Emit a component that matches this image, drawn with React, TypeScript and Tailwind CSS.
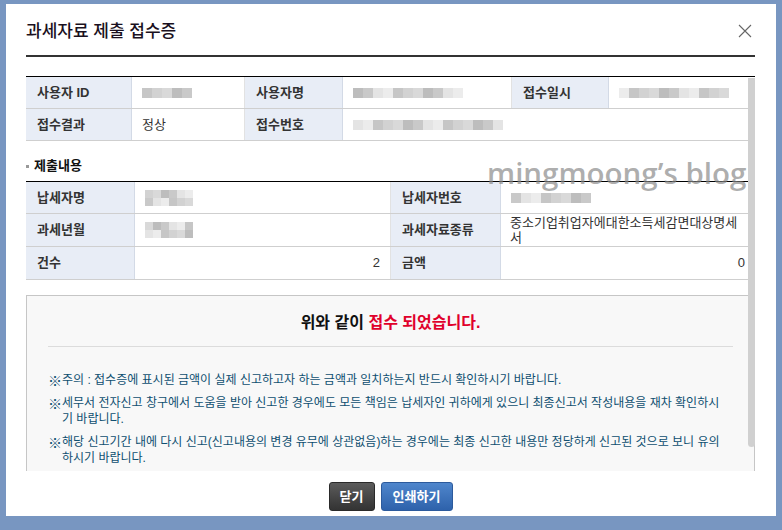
const shades = ['#d9d9d9', '#c6c6c6', '#e4e4e4', '#bdbdbd', '#d2d2d2', '#ececec', '#c9c9c9'];

function Blur({ w, rows = 1, seed = 0, size = 10 }: { w: number; rows?: number; seed?: number; size?: number }) {
  const cols = Math.round(w / size);
  return (
    <div className="flex flex-col blur-[0.6px]">
      {Array.from({ length: rows }).map((_, r) => (
        <div key={r} className="flex">
          {Array.from({ length: cols }).map((_, c) => (
            <span
              key={c}
              className="block"
              style={{ width: size, height: size, background: shades[(c * 3 + r * 2 + seed) % shades.length] }}
            />
          ))}
        </div>
      ))}
    </div>
  );
}

const th = 'flex items-center bg-[#e8edf6] pl-[11px] text-[13px] font-bold text-[#333] border-r border-[#d3dae6]';
const td = 'flex items-center px-[10px] text-[13px] text-[#333] border-r border-[#e2e2e2]';

function Note({ lines }: { lines: string[] }) {
  return (
    <li className="flex">
      <span className="w-[13px] shrink-0 font-['Noto_Sans_CJK_KR',sans-serif] text-[14px] leading-[16px]">※</span>
      <span className="flex flex-col whitespace-nowrap pl-[1px]">
        {lines.map((l) => (
          <span key={l}>{l}</span>
        ))}
      </span>
    </li>
  );
}

export default function App() {
  return (
    <div className="h-[530px] w-[782px] overflow-hidden bg-[#7896c1] pb-[14px] pl-[6px] pr-[6px] pt-[4px] font-['Liberation_Sans','Noto_Sans_CJK_KR',sans-serif]">
      <div className="relative flex h-[512px] flex-col bg-white px-[20px] pr-[21px]">
        <header className="flex h-[51px] items-center justify-between">
          <h1 className="pt-[4px] text-[17px] font-medium leading-none text-[#1a1020]">과세자료 제출 접수증</h1>
          <svg width="14" height="14" viewBox="0 0 14 14" className="mr-[3px] mt-[2px]">
            <path d="M1 1L13 13M13 1L1 13" stroke="#666" strokeWidth="1.1" />
          </svg>
        </header>
        <div className="h-[2px] bg-[#333]" />

        <div className="relative mt-[19px] h-[395px] overflow-hidden">
          {/* 수신 정보 */}
          <div className="border-t border-black">
            <div className="grid h-[32px] grid-cols-[106px_113px_98px_169px_97px_1fr] border-b border-[#cfcfcf]">
              <div className={th}>사용자 ID</div>
              <div className={td}><Blur w={50} seed={1} /></div>
              <div className={th}>사용자명</div>
              <div className={td}><Blur w={110} seed={3} /></div>
              <div className={th}>접수일시</div>
              <div className={`${td} border-r-0`}><Blur w={110} seed={5} /></div>
            </div>
            <div className="grid h-[32px] grid-cols-[106px_113px_98px_1fr] border-b border-[#cfcfcf]">
              <div className={th}>접수결과</div>
              <div className={td}>정상</div>
              <div className={th}>접수번호</div>
              <div className={`${td} border-r-0`}><Blur w={150} seed={2} /></div>
            </div>
          </div>

          <div className="flex h-[40px] items-center gap-[5px] pt-[10px]">
            <span className="block h-[3px] w-[3px] bg-[#999]" />
            <span className="text-[13px] font-bold text-[#111]">제출내용</span>
          </div>

          {/* 제출내용 */}
          <div className="border-t border-black">
            <div className="grid h-[32px] grid-cols-[109px_256px_110px_1fr] border-b border-[#cfcfcf]">
              <div className={th}>납세자명</div>
              <div className={td}><Blur w={48} rows={2} seed={4} size={8} /></div>
              <div className={th}>납세자번호</div>
              <div className={`${td} border-r-0`}><Blur w={80} seed={6} /></div>
            </div>
            <div className="grid h-[33px] grid-cols-[109px_256px_110px_1fr] border-b border-[#cfcfcf]">
              <div className={th}>과세년월</div>
              <div className={td}><Blur w={48} rows={2} seed={0} size={8} /></div>
              <div className={th}>과세자료종류</div>
              <div className={`${td} border-r-0 pl-[9px] text-[12.5px] leading-[15px]`}>
                중소기업취업자에대한소득세감면대상명세<br />서
              </div>
            </div>
            <div className="grid h-[33px] grid-cols-[109px_256px_110px_1fr] border-b border-[#cfcfcf]">
              <div className={th}>건수</div>
              <div className={`${td} justify-end`}>2</div>
              <div className={th}>금액</div>
              <div className={`${td} justify-end border-r-0`}>0</div>
            </div>
          </div>

          {/* 안내 */}
          <div className="mt-[15px] border border-[#c6c6c6] bg-[#f8f8f8] px-[21px] pb-[40px]">
            <p className="flex h-[50px] items-center justify-center pt-[4px] text-[16px] font-bold text-[#111]">
              위와 같이&nbsp;<span className="text-[#e0002b]">접수 되었습니다.</span>
            </p>
            <div className="h-px bg-[#dcdcdc]" />
            <ul className="mt-[25px] flex flex-col gap-[7px] text-[12px] leading-[16px] text-[#0e4f70]">
              <Note lines={['주의 : 접수증에 표시된 금액이 실제 신고하고자 하는 금액과 일치하는지 반드시 확인하시기 바랍니다.']} />
              <Note
                lines={[
                  '세무서 전자신고 창구에서 도움을 받아 신고한 경우에도 모든 책임은 납세자인 귀하에게 있으니 최종신고서 작성내용을 재차 확인하시',
                  '기 바랍니다.',
                ]}
              />
              <Note
                lines={[
                  '해당 신고기간 내에 다시 신고(신고내용의 변경 유무에 상관없음)하는 경우에는 최종 신고한 내용만 정당하게 신고된 것으로 보니 유의',
                  '하시기 바랍니다.',
                ]}
              />
            </ul>
          </div>

          {/* scrollbar */}
          <div className="absolute right-0 top-[2px] h-[369px] w-[7px] rounded-b-[4px] bg-[#d0d0d0]" />
        </div>

        <div className="mt-[11px] flex justify-center gap-[6px]">
          <button className="h-[29px] w-[46px] rounded-[3px] border border-[#2a2a2a] bg-gradient-to-b from-[#5c5c5c] to-[#333] text-[13px] font-bold text-white">
            닫기
          </button>
          <button className="h-[29px] w-[72px] rounded-[3px] border border-[#2c5a9c] bg-gradient-to-b from-[#4f86cc] to-[#2e62ab] text-[13px] font-bold text-white">
            인쇄하기
          </button>
        </div>

        <div className="pointer-events-none absolute left-[481px] top-[147px] font-['Open_Sans',sans-serif] text-[29.5px] font-semibold text-[#8a8a8a]/70">
          mingmoong’s blog
        </div>
      </div>
    </div>
  );
}
